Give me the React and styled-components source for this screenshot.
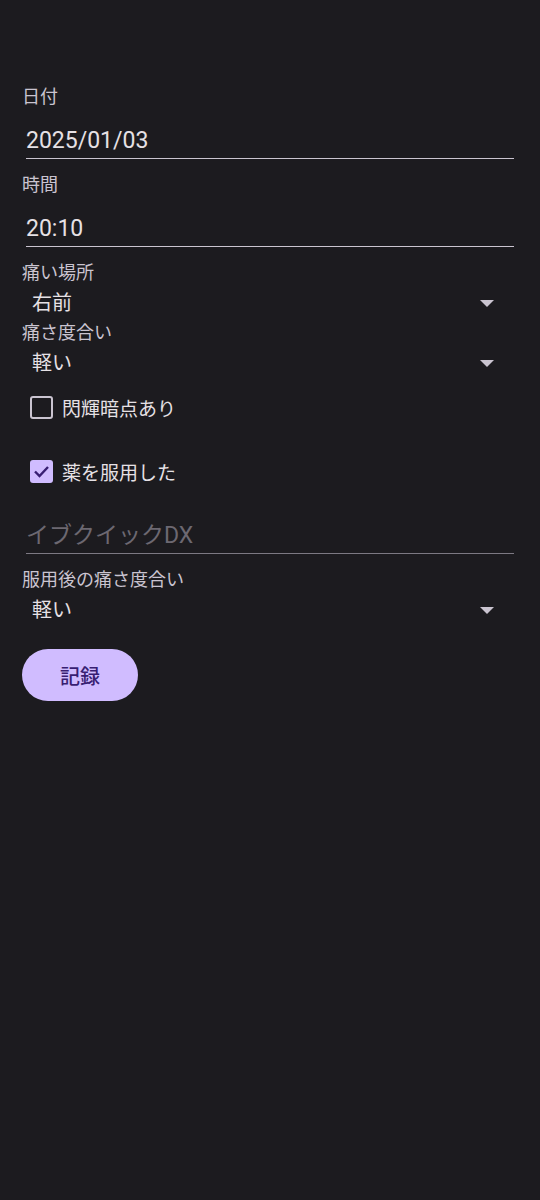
import styled, { createGlobalStyle } from "styled-components";

const GlobalStyle = createGlobalStyle`
  body {
    margin: 0;
    background: #1c1b1f;
    font-family: Roboto, "Noto Sans CJK JP", sans-serif;
  }
`;

const Screen = styled.div`
  min-height: 1200px;
  background: #1c1b1f;
`;

const Form = styled.form`
  display: flex;
  flex-direction: column;
  align-items: stretch;
  padding: 84px 26px 0 22px;
`;

const FieldLabel = styled.div`
  font-size: 18px;
  line-height: 26px;
  color: #cac4d0;
`;

const TextField = styled.div`
  margin: ${(p) => p.$top || 0}px 0 13px 4px;
  border-bottom: 1.5px solid ${(p) => (p.$disabled ? "#7d7983" : "#cac4d0")};
`;

const Input = styled.input`
  display: block;
  box-sizing: border-box;
  width: 100%;
  height: 48px;
  padding: 12px 0 0 0;
  border: none;
  outline: none;
  background: transparent;
  font-family: Roboto, "Noto Sans CJK JP", sans-serif;
  font-size: 23px;
  color: #e6e1e5;

  &::placeholder {
    color: #6c6871;
  }
`;

const Select = styled.div`
  display: flex;
  align-items: center;
  justify-content: space-between;
  height: 34px;
  padding: 0 20px 0 10px;
`;

const SelectValue = styled.span`
  font-size: 20px;
  line-height: 34px;
  color: #e6e1e5;
`;

const CheckRow = styled.label`
  display: flex;
  align-items: center;
  gap: 9px;
  height: 48px;
  margin: ${(p) => p.$top}px 0 0 8px;
`;

const Box = styled.span`
  display: flex;
  align-items: center;
  justify-content: center;
  box-sizing: border-box;
  width: 23px;
  height: 23px;
  border-radius: 3px;
  border: ${(p) => (p.$checked ? "none" : "2px solid #cac4d0")};
  background: ${(p) => (p.$checked ? "#d0bcff" : "transparent")};
`;

const CheckText = styled.span`
  font-size: 19px;
  color: #e6e1e5;
`;

const Button = styled.button`
  align-self: flex-start;
  width: 116px;
  height: 52px;
  margin-top: 22px;
  border: none;
  border-radius: 26px;
  background: #d0bcff;
  color: #381e72;
  font-family: Roboto, "Noto Sans CJK JP", sans-serif;
  font-size: 20px;
  font-weight: 500;
`;

function Arrow() {
  return (
    <svg width="14" height="7" viewBox="0 0 14 7">
      <path d="M0 0h14L7 7z" fill="#cac4d0" />
    </svg>
  );
}

function Check() {
  return (
    <svg width="17" height="13" viewBox="0 0 17 13">
      <path
        d="M2 6.5l4.5 4.5L15 2"
        fill="none"
        stroke="#381e72"
        strokeWidth="2.4"
      />
    </svg>
  );
}

function Dropdown({ label, value }) {
  return (
    <>
      <FieldLabel>{label}</FieldLabel>
      <Select>
        <SelectValue>{value}</SelectValue>
        <Arrow />
      </Select>
    </>
  );
}

export default function App() {
  return (
    <Screen>
      <GlobalStyle />
      <Form onSubmit={(e) => e.preventDefault()}>
        <FieldLabel>日付</FieldLabel>
        <TextField>
          <Input readOnly value="2025/01/03" />
        </TextField>

        <FieldLabel>時間</FieldLabel>
        <TextField>
          <Input readOnly value="20:10" />
        </TextField>

        <Dropdown label="痛い場所" value="右前" />
        <Dropdown label="痛さ度合い" value="軽い" />

        <CheckRow $top={3.5}>
          <Box />
          <CheckText>閃輝暗点あり</CheckText>
        </CheckRow>
        <CheckRow $top={15.5}>
          <Box $checked>
            <Check />
          </Box>
          <CheckText>薬を服用した</CheckText>
        </CheckRow>

        <TextField $top={10} $disabled>
          <Input placeholder="イブクイックDX" />
        </TextField>

        <Dropdown label="服用後の痛さ度合い" value="軽い" />

        <Button type="submit">記録</Button>
      </Form>
    </Screen>
  );
}
